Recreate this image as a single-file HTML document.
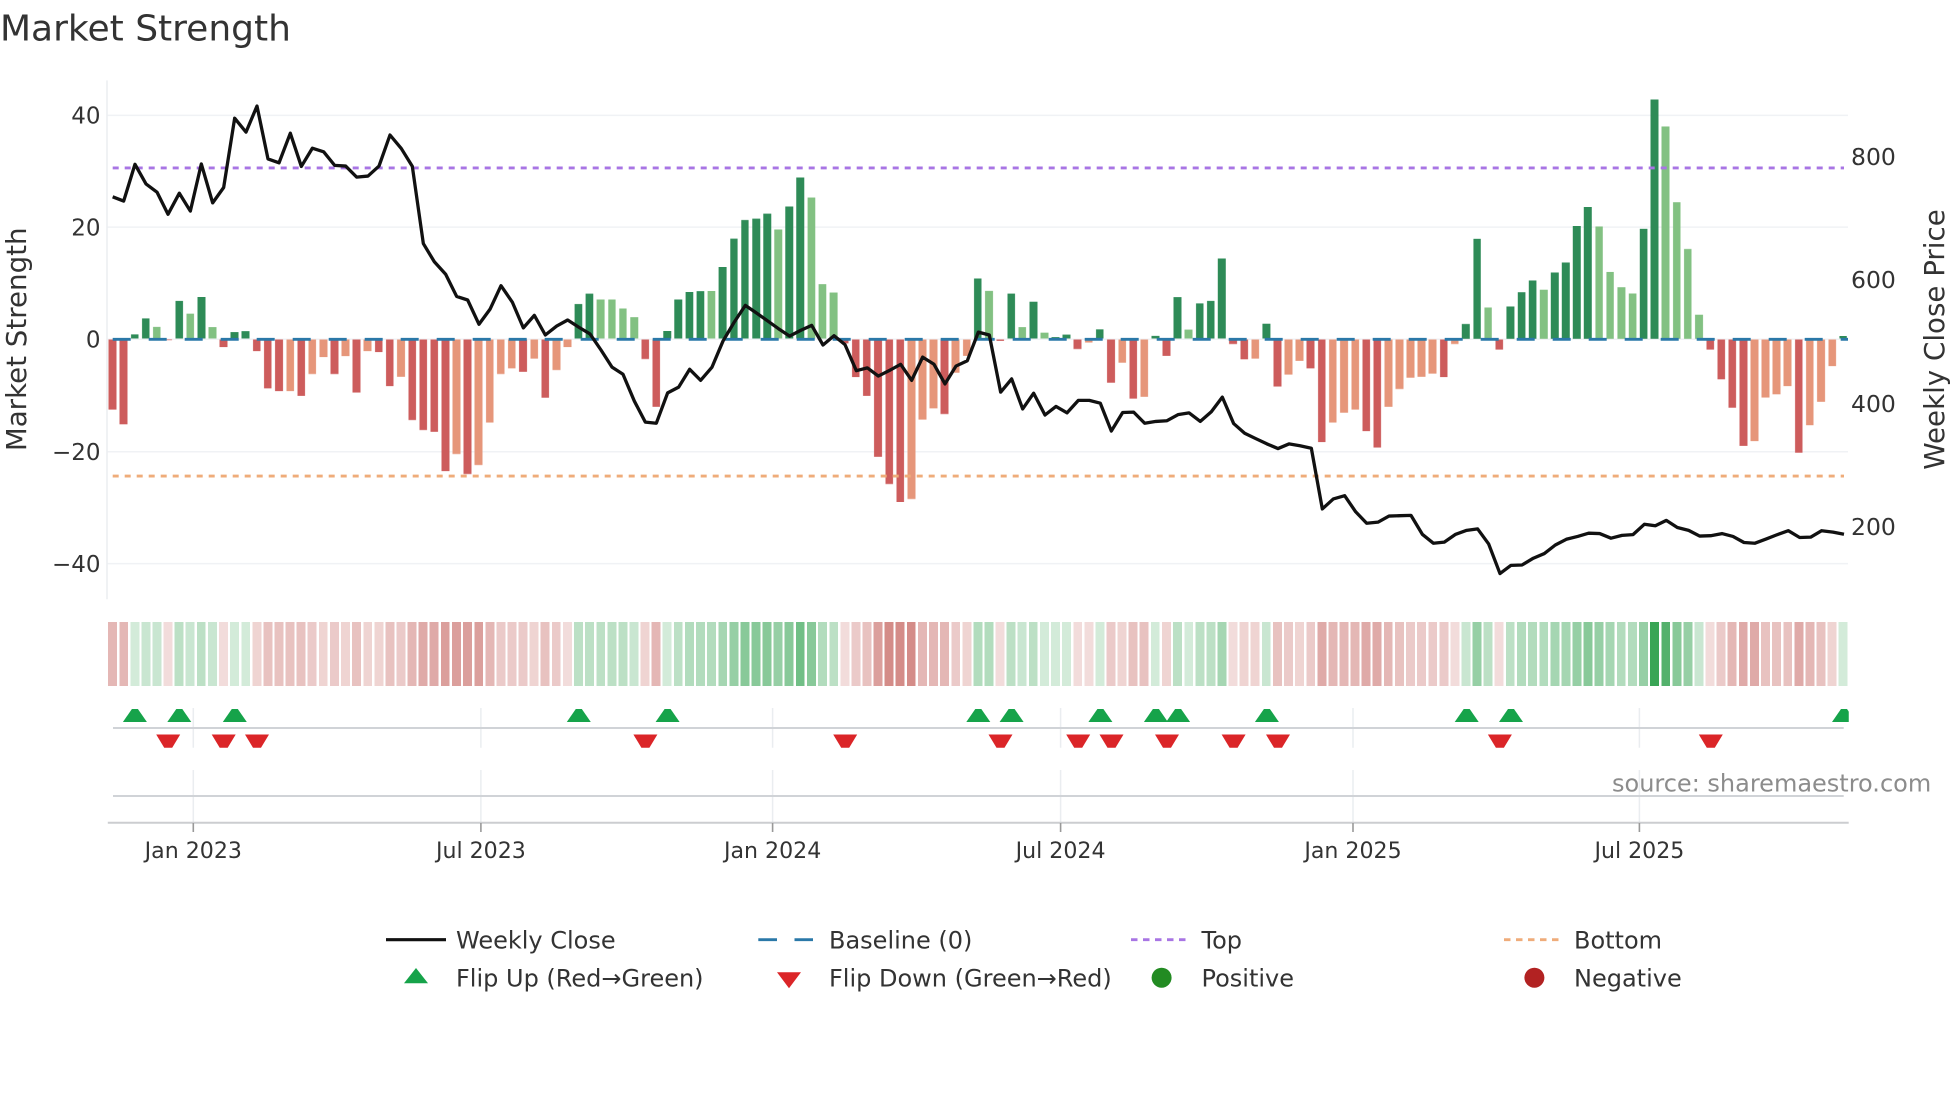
<!DOCTYPE html>
<html><head><meta charset="utf-8"><title>Market Strength</title>
<style>
html,body{margin:0;padding:0;background:#fff;width:1960px;height:1102px;overflow:hidden}
svg{position:absolute;left:0;top:0}
text{font-family:"DejaVu Sans","Liberation Sans",sans-serif;fill:#333}
.bars{position:absolute;left:107.15px;top:339.3px;width:5300px;height:0;display:flex;align-items:flex-start;transform-origin:0 0;transform:scale(.33333,.35714)}
.bars i{display:block;flex:0 0 33.294px;box-sizing:border-box;padding:0 5px;background-clip:content-box}
.bars .D{background-color:#2e8b57;transform:translateY(-100%) translateY(-1px)}
.bars .L{background-color:#82c182;transform:translateY(-100%) translateY(-1px)}
.bars .R{background-color:#cd5c5c;margin-top:2px}
.bars .O{background-color:#e6967a;margin-top:2px}
.strip{position:absolute;left:107.3px;top:622px;width:5300px;height:64px;display:flex;transform-origin:0 0;transform:scaleX(.33333)}
.strip i{display:block;flex:0 0 33.294px;height:64px;box-sizing:border-box;padding:0 3.3px;background-clip:content-box}
.a{background-color:rgba(46,160,76,.21)}.b{background-color:rgba(46,160,76,.26)}.c{background-color:rgba(46,160,76,.32)}.d{background-color:rgba(46,160,76,.37)}.e{background-color:rgba(46,160,76,.43)}.f{background-color:rgba(46,160,76,.5)}.g{background-color:rgba(46,160,76,.57)}.h{background-color:rgba(46,160,76,.68)}.i{background-color:rgba(46,160,76,.82)}.j{background-color:rgba(46,160,76,.95)}
.A{background-color:rgba(195,95,90,.22)}.B{background-color:rgba(195,95,90,.27)}.C{background-color:rgba(195,95,90,.33)}.strip .D{background-color:rgba(195,95,90,.38)}.E{background-color:rgba(195,95,90,.45)}.F{background-color:rgba(195,95,90,.53)}.G{background-color:rgba(195,95,90,.6)}.H{background-color:rgba(195,95,90,.72)}
</style></head><body>
<svg width="1960" height="1102" viewBox="0 0 1960 1102">
<g stroke="#f0f2f5" stroke-width="1.5" fill="none">
<path d="M107 115.4H1848M107 227.1H1848M107 339.3H1848M107 451.8H1848M107 563.6H1848"/>
<path d="M107 80.4V599.3" stroke="#eceef1"/>
</g>
</svg>
<div class="bars"><i class=R style=height:196px></i><i class=R style=height:237px></i><i class=D style=height:12px></i><i class=D style=height:57px></i><i class=L style=height:33px></i><i class=R style=height:2px></i><i class=D style=height:106px></i><i class=L style=height:70px></i><i class=D style=height:116px></i><i class=L style=height:32px></i><i class=R style=height:21px></i><i class=D style=height:18px></i><i class=D style=height:21px></i><i class=R style=height:32px></i><i class=R style=height:136px></i><i class=R style=height:144px></i><i class=O style=height:144px></i><i class=R style=height:157px></i><i class=O style=height:96px></i><i class=O style=height:49px></i><i class=R style=height:96px></i><i class=O style=height:46px></i><i class=R style=height:148px></i><i class=O style=height:32px></i><i class=R style=height:35px></i><i class=R style=height:130px></i><i class=O style=height:104px></i><i class=R style=height:225px></i><i class=R style=height:253px></i><i class=R style=height:258px></i><i class=R style=height:368px></i><i class=O style=height:320px></i><i class=R style=height:376px></i><i class=O style=height:351px></i><i class=O style=height:232px></i><i class=O style=height:96px></i><i class=O style=height:80px></i><i class=R style=height:90px></i><i class=O style=height:53px></i><i class=R style=height:163px></i><i class=O style=height:85px></i><i class=O style=height:21px></i><i class=D style=height:97px></i><i class=D style=height:126px></i><i class=L style=height:110px></i><i class=L style=height:110px></i><i class=L style=height:85px></i><i class=L style=height:60px></i><i class=R style=height:54px></i><i class=R style=height:188px></i><i class=D style=height:22px></i><i class=D style=height:110px></i><i class=D style=height:131px></i><i class=D style=height:133px></i><i class=L style=height:134px></i><i class=D style=height:201px></i><i class=D style=height:280px></i><i class=D style=height:332px></i><i class=D style=height:336px></i><i class=D style=height:350px></i><i class=L style=height:306px></i><i class=D style=height:370px></i><i class=D style=height:451px></i><i class=L style=height:395px></i><i class=L style=height:153px></i><i class=L style=height:129px></i><i class=R style=height:10px></i><i class=R style=height:105px></i><i class=R style=height:157px></i><i class=R style=height:328px></i><i class=R style=height:404px></i><i class=R style=height:455px></i><i class=O style=height:446px></i><i class=O style=height:224px></i><i class=O style=height:192px></i><i class=R style=height:208px></i><i class=O style=height:93px></i><i class=O style=height:45px></i><i class=D style=height:168px></i><i class=L style=height:134px></i><i class=R style=height:3px></i><i class=D style=height:126px></i><i class=L style=height:32px></i><i class=D style=height:104px></i><i class=L style=height:17px></i><i class=D style=height:4px></i><i class=D style=height:11px></i><i class=R style=height:26px></i><i class=O style=height:8px></i><i class=D style=height:26px></i><i class=R style=height:121px></i><i class=O style=height:65px></i><i class=R style=height:165px></i><i class=O style=height:160px></i><i class=D style=height:8px></i><i class=R style=height:45px></i><i class=D style=height:116px></i><i class=L style=height:25px></i><i class=D style=height:99px></i><i class=D style=height:106px></i><i class=D style=height:225px></i><i class=R style=height:12px></i><i class=R style=height:55px></i><i class=O style=height:53px></i><i class=D style=height:42px></i><i class=R style=height:131px></i><i class=O style=height:98px></i><i class=O style=height:59px></i><i class=R style=height:80px></i><i class=R style=height:287px></i><i class=O style=height:232px></i><i class=O style=height:205px></i><i class=O style=height:196px></i><i class=R style=height:256px></i><i class=R style=height:302px></i><i class=O style=height:188px></i><i class=O style=height:138px></i><i class=O style=height:107px></i><i class=O style=height:104px></i><i class=O style=height:95px></i><i class=R style=height:105px></i><i class=O style=height:12px></i><i class=D style=height:41px></i><i class=D style=height:280px></i><i class=L style=height:87px></i><i class=R style=height:28px></i><i class=D style=height:90px></i><i class=D style=height:130px></i><i class=D style=height:163px></i><i class=L style=height:137px></i><i class=D style=height:185px></i><i class=D style=height:213px></i><i class=D style=height:316px></i><i class=D style=height:369px></i><i class=L style=height:314px></i><i class=L style=height:187px></i><i class=L style=height:144px></i><i class=L style=height:127px></i><i class=D style=height:308px></i><i class=D style=height:670px></i><i class=L style=height:594px></i><i class=L style=height:382px></i><i class=L style=height:251px></i><i class=L style=height:67px></i><i class=R style=height:28px></i><i class=R style=height:111px></i><i class=R style=height:191px></i><i class=R style=height:297px></i><i class=O style=height:284px></i><i class=O style=height:162px></i><i class=O style=height:153px></i><i class=O style=height:130px></i><i class=R style=height:317px></i><i class=O style=height:240px></i><i class=O style=height:174px></i><i class=O style=height:74px></i><i class=D style=height:8px></i></div>
<div class="strip"><i class=E></i><i class=E></i><i class=a></i><i class=b></i><i class=b></i><i class=A></i><i class=c></i><i class=b></i><i class=c></i><i class=b></i><i class=A></i><i class=a></i><i class=a></i><i class=B></i><i class=D></i><i class=D></i><i class=D></i><i class=D></i><i class=C></i><i class=B></i><i class=C></i><i class=B></i><i class=D></i><i class=B></i><i class=B></i><i class=D></i><i class=C></i><i class=E></i><i class=F></i><i class=F></i><i class=G></i><i class=G></i><i class=G></i><i class=G></i><i class=E></i><i class=C></i><i class=C></i><i class=C></i><i class=B></i><i class=D></i><i class=C></i><i class=A></i><i class=c></i><i class=c></i><i class=c></i><i class=c></i><i class=c></i><i class=b></i><i class=B></i><i class=E></i><i class=a></i><i class=c></i><i class=d></i><i class=d></i><i class=d></i><i class=e></i><i class=f></i><i class=g></i><i class=g></i><i class=g></i><i class=f></i><i class=g></i><i class=h></i><i class=g></i><i class=d></i><i class=c></i><i class=A></i><i class=C></i><i class=D></i><i class=G></i><i class=H></i><i class=H></i><i class=H></i><i class=E></i><i class=E></i><i class=E></i><i class=C></i><i class=B></i><i class=d></i><i class=d></i><i class=A></i><i class=c></i><i class=b></i><i class=c></i><i class=a></i><i class=a></i><i class=a></i><i class=A></i><i class=A></i><i class=a></i><i class=C></i><i class=B></i><i class=D></i><i class=D></i><i class=a></i><i class=B></i><i class=c></i><i class=a></i><i class=c></i><i class=c></i><i class=e></i><i class=A></i><i class=B></i><i class=B></i><i class=b></i><i class=D></i><i class=C></i><i class=B></i><i class=C></i><i class=F></i><i class=E></i><i class=E></i><i class=E></i><i class=F></i><i class=F></i><i class=E></i><i class=D></i><i class=C></i><i class=C></i><i class=C></i><i class=C></i><i class=A></i><i class=b></i><i class=f></i><i class=c></i><i class=A></i><i class=c></i><i class=d></i><i class=d></i><i class=d></i><i class=e></i><i class=e></i><i class=f></i><i class=g></i><i class=f></i><i class=e></i><i class=d></i><i class=d></i><i class=f></i><i class=j></i><i class=i></i><i class=g></i><i class=f></i><i class=b></i><i class=A></i><i class=C></i><i class=E></i><i class=F></i><i class=F></i><i class=D></i><i class=D></i><i class=D></i><i class=F></i><i class=E></i><i class=D></i><i class=B></i><i class=a></i></div>
<svg width="1960" height="1102" viewBox="0 0 1960 1102">
<defs>
<polygon id="up" points="-12,13 -3,0 3,0 12,13" fill="#16a34a"/>
<polygon id="dn" points="-12,0 12,0 4,13.3 -4,13.3" fill="#db2528"/>
<clipPath id="cp"><rect x="100" y="700" width="1748.75" height="60"/></clipPath>
</defs>
<g fill="none">
<path d="M112.7 167.9H1844" stroke="#a875e4" stroke-width="2.9" stroke-dasharray="6 6"/>
<path d="M112.7 476.1H1844" stroke="#efac7a" stroke-width="2.9" stroke-dasharray="6 6"/>
<path d="M112.7 339.3H1848" stroke="#2a78a8" stroke-width="2.8" stroke-dasharray="18 18"/>
<g transform="translate(0,60) scale(.33333,.35714)">
<polyline vector-effect="non-scaling-stroke" stroke="#111" stroke-width="3.3" stroke-linejoin="round" points="338,383 371,395 405,292 438,347 471,370 504,432 538,373 571,423 604,291 638,400 671,357 704,163 738,202 771,129 804,277 837,288 871,205 904,298 937,247 971,257 1004,295 1037,297 1070,328 1104,325 1137,297 1170,210 1204,248 1237,298 1270,514 1303,565 1337,600 1370,662 1403,672 1437,740 1470,698 1503,632 1537,678 1570,750 1603,715 1636,770 1670,745 1703,728 1736,748 1770,767 1803,812 1836,860 1869,880 1903,955 1936,1014 1969,1017 2003,932 2036,916 2069,866 2102,897 2136,860 2169,787 2202,735 2236,687 2269,708 2302,730 2335,752 2369,773 2402,757 2435,743 2469,798 2502,772 2535,797 2569,870 2602,862 2635,885 2669,869 2702,852 2735,897 2768,832 2802,852 2835,907 2868,857 2902,842 2935,762 2968,770 3002,930 3035,893 3068,977 3101,933 3135,994 3168,970 3201,988 3235,953 3268,953 3301,961 3334,1039 3368,987 3401,986 3434,1017 3468,1012 3501,1010 3534,993 3567,988 3601,1012 3634,985 3667,944 3701,1018 3734,1045 3767,1060 3801,1075 3834,1088 3867,1075 3900,1080 3934,1087 3967,1257 4000,1229 4034,1220 4067,1265 4100,1297 4134,1294 4167,1277 4200,1276 4233,1275 4267,1328 4300,1353 4333,1350 4367,1328 4400,1317 4433,1313 4466,1355 4500,1438 4533,1415 4566,1414 4600,1395 4633,1382 4666,1358 4699,1342 4733,1334 4766,1325 4799,1326 4833,1339 4866,1331 4899,1329 4933,1300 4966,1304 4999,1289 5032,1309 5066,1317 5099,1333 5132,1332 5166,1326 5199,1334 5232,1351 5265,1353 5299,1341 5332,1329 5365,1318 5399,1337 5432,1336 5465,1318 5499,1322 5532,1328"/>
</g>
<g stroke="#eaedf0" stroke-width="1.5">
<path d="M193.3 708V747.7M480.9 708V747.7M772.6 708V747.7M1060.6 708V747.7M1353 708V747.7M1639.4 708V747.7"/>
<path d="M193.3 770V822.7M480.9 770V822.7M772.6 770V822.7M1060.6 770V822.7M1353 770V822.7M1639.4 770V822.7"/>
</g>
<path d="M113 728H1843.7M113 796H1843.7" stroke="#d0d3d7" stroke-width="2"/>
<path d="M107.8 822.7H1848.7" stroke="#cccdd0" stroke-width="2"/>
<path d="M193.3 823V832M480.9 823V832M772.6 823V832M1060.6 823V832M1353 823V832M1639.4 823V832" stroke="#999" stroke-width="1.6"/>
</g>
<g clip-path="url(#cp)">
<use href="#up" x="134.9" y="709"/><use href="#up" x="179.3" y="709"/><use href="#up" x="234.8" y="709"/><use href="#up" x="578.8" y="709"/><use href="#up" x="667.6" y="709"/><use href="#up" x="978.3" y="709"/><use href="#up" x="1011.6" y="709"/><use href="#up" x="1100.4" y="709"/><use href="#up" x="1155.9" y="709"/><use href="#up" x="1178.1" y="709"/><use href="#up" x="1266.9" y="709"/><use href="#up" x="1466.7" y="709"/><use href="#up" x="1511" y="709"/><use href="#up" x="1844" y="709"/>
<use href="#dn" x="168.2" y="734.5"/><use href="#dn" x="223.7" y="734.5"/><use href="#dn" x="257" y="734.5"/><use href="#dn" x="645.4" y="734.5"/><use href="#dn" x="845.2" y="734.5"/><use href="#dn" x="1000.5" y="734.5"/><use href="#dn" x="1078.2" y="734.5"/><use href="#dn" x="1111.5" y="734.5"/><use href="#dn" x="1167" y="734.5"/><use href="#dn" x="1233.6" y="734.5"/><use href="#dn" x="1278" y="734.5"/><use href="#dn" x="1499.9" y="734.5"/><use href="#dn" x="1710.8" y="734.5"/>
</g>
<text x="0" y="40.7" font-size="36">Market Strength</text>
<g font-size="23" text-anchor="end">
<text x="100.5" y="123.6">40</text><text x="100.5" y="235.3">20</text><text x="100.5" y="347.5">0</text><text x="100.5" y="460">−20</text><text x="100.5" y="571.8">−40</text>
</g>
<g font-size="23.5">
<text x="1851" y="164.8">800</text><text x="1851" y="288">600</text><text x="1851" y="412">400</text><text x="1851" y="535">200</text>
</g>
<text transform="translate(26,339.3) rotate(-90)" font-size="27.7" text-anchor="middle">Market Strength</text>
<text transform="translate(1944,339.5) rotate(-90)" font-size="27.7" text-anchor="middle">Weekly Close Price</text>
<g font-size="22.1" text-anchor="middle">
<text x="193.3" y="858">Jan 2023</text><text x="480.9" y="858">Jul 2023</text><text x="772.6" y="858">Jan 2024</text><text x="1060.6" y="858">Jul 2024</text><text x="1353" y="858">Jan 2025</text><text x="1639.4" y="858">Jul 2025</text>
</g>
<text x="1612" y="791.7" font-size="24" style="fill:#8c8c8c">source: sharemaestro.com</text>
<g font-size="24">
<text x="456" y="948.3">Weekly Close</text><text x="456" y="986.7">Flip Up (Red→Green)</text>
<text x="829" y="948.3">Baseline (0)</text><text x="829" y="986.7">Flip Down (Green→Red)</text>
<text x="1201.5" y="948.3">Top</text><text x="1201.5" y="986.7">Positive</text>
<text x="1574" y="948.3">Bottom</text><text x="1574" y="986.7">Negative</text>
</g>
<g fill="none" stroke-width="2.8">
<path d="M386 939.7H446" stroke="#111" stroke-width="3.2"/>
<path d="M758.3 939.7H777M794.5 939.7H813" stroke="#2a78a8"/>
<path d="M1131 939.7H1186" stroke="#a875e4" stroke-dasharray="6.5 5.5"/>
<path d="M1504 939.7H1558.5" stroke="#efac7a" stroke-dasharray="6.5 5.5"/>
</g>
<polygon points="404,983.3 416,968 428,983.3" fill="#16a34a"/>
<polygon points="777,972.3 801,972.3 789,988.3" fill="#db2528"/>
<circle cx="1161.6" cy="977.7" r="10" fill="#228b22"/>
<circle cx="1534.4" cy="977.7" r="10" fill="#b22222"/>
</svg>
</body></html>
